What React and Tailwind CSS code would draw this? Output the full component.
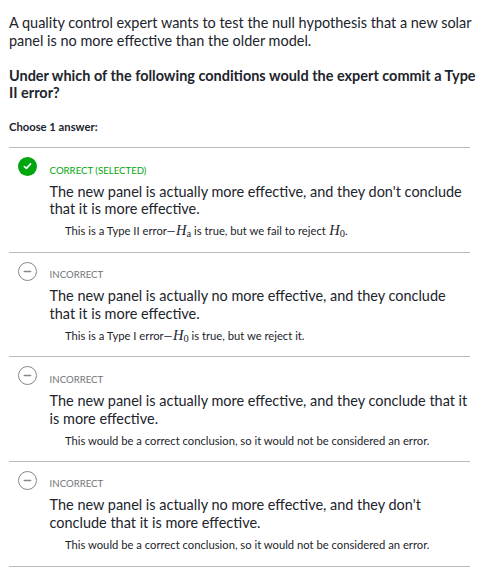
import React from 'react';

function MathVar({ base, sub }) {
  return (
    <span className="ml-[0.5px] inline-block font-['Liberation_Serif',serif] text-[14.5px] leading-none">
      <i>{base}</i>
      <span className="relative top-[2px] text-[10.5px]">{sub}</span>
    </span>
  );
}

function CorrectIcon() {
  return (
    <svg width="19" height="19" viewBox="0 0 19 19" className="block">
      <circle cx="9.5" cy="9.5" r="9.5" fill="#00a60e" />
      <path d="M6.3 9.5 8.4 11.4 12.6 6.9" fill="none" stroke="#fff" strokeWidth="1.6" strokeLinecap="round" strokeLinejoin="round" />
    </svg>
  );
}

function IncorrectIcon() {
  return (
    <svg width="19" height="19" viewBox="0 0 19 19" className="block">
      <circle cx="9.5" cy="9.5" r="9" fill="#fff" stroke="#85878d" strokeWidth="1" />
      <path d="M6.3 9.5H12.6" stroke="#85878c" strokeWidth="1.4" strokeLinecap="round" />
    </svg>
  );
}

const answers = [
  {
    correct: true,
    lines: ['The new panel is actually more effective, and they don\'t conclude', 'that it is more effective.'],
    note: (
      <>This is a Type II error—<MathVar base="H" sub="a" /> is true, but we fail to reject <MathVar base="H" sub="0" />.</>
    ),
  },
  {
    lines: ['The new panel is actually no more effective, and they conclude', 'that it is more effective.'],
    note: (
      <>This is a Type I error—<MathVar base="H" sub="0" /> is true, but we reject it.</>
    ),
  },
  {
    lines: ['The new panel is actually more effective, and they conclude that it', 'is more effective.'],
    note: 'This would be a correct conclusion, so it would not be considered an error.',
  },
  {
    lines: ['The new panel is actually no more effective, and they don\'t', 'conclude that it is more effective.'],
    note: 'This would be a correct conclusion, so it would not be considered an error.',
  },
];

function Answer({ correct, lines, note }) {
  return (
    <li className="flex h-[104.6px] border-b border-[#b9babd] pl-[8.6px]">
      <div className="w-[32px] shrink-0 pt-[8.8px]">{correct ? <CorrectIcon /> : <IncorrectIcon />}</div>
      <div className="whitespace-nowrap pt-[14.5px]">
        <div className={correct ? 'text-[9.64px] leading-[14px] text-[#00a60e]' : 'text-[9.64px] leading-[14px] text-[#71747a]'}>
          {correct ? 'CORRECT (SELECTED)' : 'INCORRECT'}
        </div>
        <div className="mt-[6px] text-[14.46px] leading-[17.67px]">
          {lines.map((line) => <div key={line}>{line}</div>)}
        </div>
        <div className="mt-[4.35px] h-[18px] pl-[15.4px] text-[11.24px] leading-[18px]">{note}</div>
      </div>
    </li>
  );
}

export default function App() {
  return (
    <main className="h-[575px] w-[500px] overflow-hidden bg-white pl-[9px] pt-[14px] font-[Lato,sans-serif] text-[#21242c]">
      <p className="whitespace-nowrap text-[14.46px] leading-[17.67px]">
        A quality control expert wants to test the null hypothesis that a new solar<br />
        panel is no more effective than the older model.
      </p>
      <p className="mt-[17.27px] whitespace-nowrap text-[14.46px] font-bold leading-[17.67px]">
        Under which of the following conditions would the expert commit a Type<br />
        II error?
      </p>
      <p className="mt-[16.4px] text-[11.24px] font-bold leading-[18px]">Choose 1 answer:</p>
      <ul className="mt-[10.8px] w-[461px] border-t border-[#b9babd]">
        {answers.map((a, i) => <Answer key={i} {...a} />)}
      </ul>
    </main>
  );
}
